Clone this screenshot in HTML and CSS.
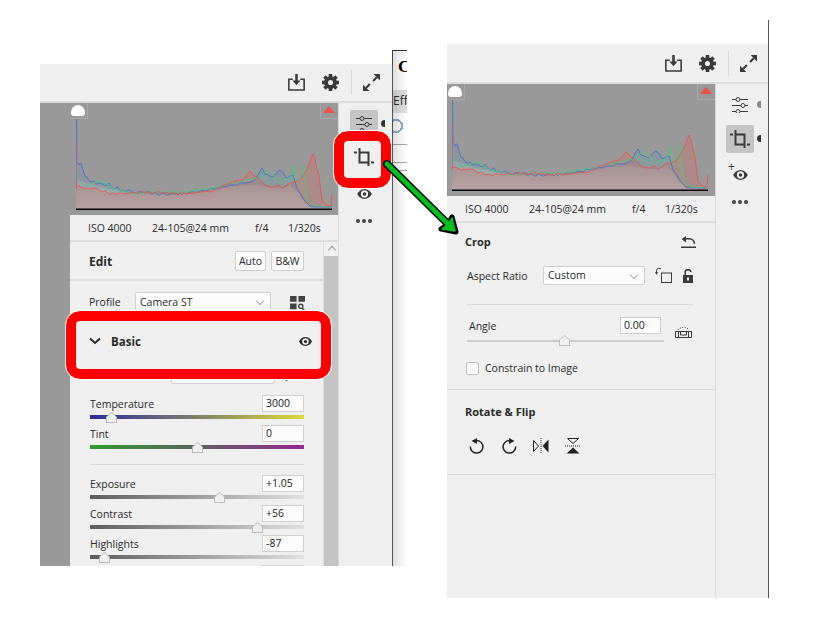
FILE: index.html
```html
<!DOCTYPE html>
<html lang="en">
<head>
    <meta charset="UTF-8">
    <title>Crop panel</title>
    <link rel="stylesheet" href="styles.css">
</head>
<body>
    <svg class="defs" xmlns="http://www.w3.org/2000/svg">
        <defs>
            <linearGradient id="lum" x1="0" y1="0" x2="0" y2="1">
                <stop offset="0" stop-color="#a8a3a3"/>
                <stop offset="1" stop-color="#c6bebe"/>
            </linearGradient>
            <symbol id="hist" viewBox="0 0 269 111">
                <polygon fill="url(#lum)" points="6,106 6,76 30,84 60,90 100,92 130,90 147,87 163,83 185,82 197,84 212,86 220,82 227,88 233,97 240,104 262,104 262,106"/>
                <polygon fill="#4a78c8" fill-opacity=".15" points="6,106 6,15 7,60 9,62 11,60 13,67 15,73 18,76 21,79 30,80 42,84 53,87 66,91 130,88 147,84 163,82 173,80 185,77 188,72 192,65 195,71 202,74 210,67 213,69 217,75 223,72 227,85 233,95 240,103 262,104 262,106"/>
                <polygon fill="#5ccf8e" fill-opacity=".14" points="6,106 6,62 9,76 12,80 16,83 24,80 30,78 38,81 44,85 50,88 60,90 130,86 163,80 187,75 192,71 197,68 203,72 213,77 220,75 223,63 225,64 227,80 232,72 234,62 236,84 238,97 247,103 262,104 262,106"/>
                <polygon fill="#f05050" fill-opacity=".22" points="6,106 6,86 9,83 14,85 20,86 26,85 32,89 40,91 46,92 60,90 130,89 147,86 163,79 173,76 180,68 185,73 190,77 197,83 202,84 207,82 212,85 220,80 230,77 238,65 243,51 247,67 249,72 252,97 257,103 261,103 262,91 262,106"/>
                <polyline class="ln blue" points="6.5,15 7,60 8,60 9,62 10,60 11,60 12,64 13,67 14,70 15,73 17,74 18,76 20,78 21,79 23,78 24,78 26,81 27,81 29,80 30,80 32,81 33,81 35,83 36,82 38,82 39,80 41,83 42,84 44,85 45,86 47,84 48,84 50,88 52,87 53,87 55,89 56,89 58,87 59,87 61,88 62,88 64,90 66,91 68,89 70,88 72,90 74,90 76,89 78,88 80,91 82,91 84,90 86,89 88,92 90,92 92,90 94,90 96,92 98,92 100,91 102,89 104,91 106,90 108,92 110,90 112,92 114,90 116,91 118,89 120,90 122,88 124,89 126,87 128,89 130,88 134,87 137,88 140,85 143,86 147,84 150,85 153,83 156,84 160,82 163,82 167,82 170,80 173,80 177,80 181,79 185,77 188,72 190,68 192,65 195,71 198,72 202,74 205,72 208,68 210,67 213,69 215,73 217,75 220,73 223,72 225,79 227,85 230,90 233,95 236,99 240,103 245,104 262,104"/>
                <polyline class="ln green" points="6,62 7,68 9,76 11,79 12,80 14,82 16,83 18,82 20,81 22,81 24,80 26,79 28,79 30,78 32,79 34,78 36,81 38,81 40,83 42,84 44,85 46,87 48,86 50,88 53,87 56,89 60,90 64,91 68,90 72,91 76,89 80,90 84,88 88,90 92,89 96,90 100,88 104,90 108,89 112,91 116,90 120,88 124,88 128,87 130,86 135,86 140,85 147,84 152,83 158,81 163,80 170,79 177,77 182,76 187,75 192,71 195,69 197,68 200,70 203,72 208,75 213,77 217,76 220,75 222,70 223,63 225,64 227,80 230,76 232,72 234,62 236,84 238,97 242,101 247,103 262,104"/>
                <polyline class="ln red" points="6,86 7,83 9,83 11,84 14,85 16,86 18,85 20,86 23,85 26,85 29,87 32,89 35,88 38,90 40,91 43,90 46,92 49,90 52,90 56,91 60,90 64,89 68,91 72,88 76,90 80,89 84,91 88,88 92,90 96,89 100,91 104,90 108,92 112,89 116,91 120,90 124,90 130,89 135,88 140,89 147,86 152,83 158,81 163,79 168,77 173,76 177,72 180,68 183,71 185,73 188,75 190,77 194,81 197,83 202,84 205,84 207,82 210,83 212,85 216,83 220,80 225,79 230,77 234,71 238,65 240,58 243,51 245,56 247,67 249,72 250,82 252,97 255,101 257,103 261,103 262,91"/>
                <path d="M6.500 40V86" stroke="#d04a90" stroke-opacity=".7"/>
                <rect x="6" y="105.500" width="256" height="1.500" fill="#000"/>
            </symbol>
            <symbol id="download" viewBox="0 0 16 16">
                <path d="M4.500 5H.8v10h14.400V5h-3.700" fill="none" stroke="currentColor" stroke-width="1.500"/>
                <path d="M6.800 0h2.400v6h2.600L8 10.600 4.200 6h2.600z" fill="currentColor"/>
            </symbol>
            <symbol id="gear" viewBox="0 0 16 16">
                <g fill="currentColor">
                    <circle cx="8" cy="8" r="6"/>
                    <rect x="6.300" y="0" width="3.400" height="16"/>
                    <rect x="6.300" y="0" width="3.400" height="16" transform="rotate(45 8 8)"/>
                    <rect x="6.300" y="0" width="3.400" height="16" transform="rotate(90 8 8)"/>
                    <rect x="6.300" y="0" width="3.400" height="16" transform="rotate(135 8 8)"/>
                </g>
                <circle cx="8" cy="8" r="2.400" fill="#efefef"/>
            </symbol>
            <symbol id="expand" viewBox="0 0 16 16">
                <path fill="currentColor" d="M10 0h6v6zM0 16v-6l6 6z"/>
                <path stroke="currentColor" stroke-width="2" d="M13 3L9.500 6.500M3 13l3.500-3.500"/>
            </symbol>
            <symbol id="sliders" viewBox="0 0 16 16">
                <g fill="none" stroke="currentColor">
                    <path d="M0 2.500h4M8 2.500h8M0 8.500h9M13 8.500h3M0 14.500h4M8 14.500h8"/>
                    <circle cx="6" cy="2.500" r="2"/>
                    <circle cx="11" cy="8.500" r="2"/>
                    <circle cx="6" cy="14.500" r="2"/>
                </g>
            </symbol>
            <symbol id="crop" viewBox="0 0 20 18">
                <path fill="none" stroke="currentColor" stroke-width="2" d="M5.500 0v14.500h9M5.500 4.500h9V18M0 4.500h3M17 14.500h3"/>
            </symbol>
            <symbol id="eye" viewBox="0 0 16 11">
                <path fill="currentColor" fill-rule="evenodd" d="M8 0c3.600 0 6.500 2.400 8 5.500C14.500 8.600 11.600 11 8 11S1.500 8.600 0 5.500C1.500 2.400 4.400 0 8 0zM8 1.500a4 4 0 1 0 0 8 4 4 0 0 0 0-8zM8 3.500a2 2 0 1 1 0 4 2 2 0 0 1 0-4z"/>
            </symbol>
            <symbol id="profiles" viewBox="0 0 16 16">
                <path fill="currentColor" d="M0 0h7v6H0zM9 0h7v6H9zM0 8h7v6H0z"/>
                <circle cx="11.500" cy="11" r="2.200" fill="none" stroke="currentColor" stroke-width="1.500"/>
                <path d="M13 13l2.500 2.500" stroke="currentColor" stroke-width="1.500"/>
            </symbol>
            <symbol id="rotate" viewBox="0 0 16 16">
                <path fill="none" stroke="currentColor" stroke-width="1.500" d="M4.500 3.300a6.300 6.300 0 1 1-3.200 5.200"/>
                <path fill="currentColor" d="M8 0v6L2.500 3z"/>
            </symbol>
        </defs>
    </svg>

    <!-- window peeking out behind the left panel -->
    <div class="back-window">
        <div class="back-title">C</div>
        <div class="back-tabs">Effe</div>
        <div class="back-tool"></div>
        <div class="back-line back-line-a"></div>
        <div class="back-line back-line-b"></div>
    </div>

    <!-- left panel: Edit -->
    <section class="panel panel-left">
        <header class="topbar">
            <svg class="ico-top"><use href="#download"/></svg>
            <svg class="ico-top"><use href="#gear"/></svg>
            <span class="top-sep"></span>
            <svg class="ico-top"><use href="#expand"/></svg>
        </header>
        <div class="panel-body">
            <div class="strip"></div>
            <div class="main">
                <div class="histogram">
                    <svg class="hist-svg"><use href="#hist"/></svg>
                    <span class="clip clip-shadow"></span>
                    <span class="clip clip-high"></span>
                </div>
                <div class="info">
                    <span class="iso">ISO 4000</span>
                    <span class="lens">24-105@24 mm</span>
                    <span class="fstop">f/4</span>
                    <span>1/320s</span>
                </div>
                <div class="scroll-wrap">
                    <div class="edit">
                        <div class="edit-head">
                            <h2>Edit</h2>
                            <button class="btn btn-auto">Auto</button>
                            <button class="btn btn-bw">B&amp;W</button>
                        </div>
                        <div class="profile-row">
                            <span class="profile-label">Profile</span>
                            <div class="select select-profile">Camera ST</div>
                            <svg class="ico-profiles"><use href="#profiles"/></svg>
                        </div>
                        <div class="basic-row">
                            <div class="select select-blank"></div>
                        </div>
                        <div class="sliders">
                            <div class="slider-row">
                                <label>Temperature</label><span class="val">3000</span>
                                <div class="track track-temp"><i class="thumb thumb-temp"></i></div>
                            </div>
                            <div class="slider-row">
                                <label>Tint</label><span class="val">0</span>
                                <div class="track track-tint"><i class="thumb thumb-tint"></i></div>
                            </div>
                            <hr class="rule">
                            <div class="slider-row">
                                <label>Exposure</label><span class="val">+1.05</span>
                                <div class="track track-grey"><i class="thumb thumb-exp"></i></div>
                            </div>
                            <div class="slider-row">
                                <label>Contrast</label><span class="val">+56</span>
                                <div class="track track-grey"><i class="thumb thumb-con"></i></div>
                            </div>
                            <div class="slider-row">
                                <label>Highlights</label><span class="val">-87</span>
                                <div class="track track-grey"><i class="thumb thumb-hi"></i></div>
                            </div>
                            <div class="slider-row">
                                <label></label><span class="val"></span>
                            </div>
                        </div>
                    </div>
                    <div class="scrollbar"><span class="scroll-up"></span></div>
                </div>
            </div>
            <aside class="rail rail-left">
                <div class="rail-item is-active is-flagged"><svg class="ico-rail"><use href="#sliders"/></svg></div>
                <div class="rail-item"><svg class="ico-crop"><use href="#crop"/></svg></div>
                <div class="rail-item rail-eye"><svg class="ico-eye"><use href="#eye"/></svg></div>
                <div class="dots"><i></i><i></i><i></i></div>
            </aside>
        </div>
    </section>

    <!-- right panel: Crop -->
    <div class="frame-line"></div>
    <section class="panel panel-right">
        <header class="topbar">
            <svg class="ico-top"><use href="#download"/></svg>
            <svg class="ico-top"><use href="#gear"/></svg>
            <span class="top-sep"></span>
            <svg class="ico-top"><use href="#expand"/></svg>
        </header>
        <div class="panel-body">
            <div class="main">
                <div class="histogram">
                    <svg class="hist-svg"><use href="#hist"/></svg>
                    <span class="clip clip-shadow"></span>
                    <span class="clip clip-high"></span>
                </div>
                <div class="info">
                    <span class="iso">ISO 4000</span>
                    <span class="lens">24-105@24 mm</span>
                    <span class="fstop">f/4</span>
                    <span>1/320s</span>
                </div>
                <div class="crop-section">
                    <div class="crop-head">
                        <h2>Crop</h2>
                        <svg class="ico-reset" viewBox="0 0 15 12">
                            <path fill="none" stroke="currentColor" stroke-width="1.500" d="M4 2.800h4.500a5 5 0 0 1 5 5"/>
                            <path fill="currentColor" d="M5 0v6.500L.5 3zM0 10.500h15V12H0z"/>
                        </svg>
                    </div>
                    <div class="aspect-row">
                        <span class="aspect-label">Aspect Ratio</span>
                        <div class="select select-aspect">Custom</div>
                        <svg class="ico-orient" viewBox="0 0 16 15">
                            <rect x="5.500" y="5" width="10" height="9.500" fill="none" stroke="currentColor"/>
                            <path fill="none" stroke="currentColor" d="M.5 5V2.500a2 2 0 0 1 2-2H5"/>
                            <path fill="currentColor" d="M-1 4h3L.5 7z"/>
                        </svg>
                        <svg class="ico-lock" viewBox="0 0 10 14">
                            <path fill="currentColor" fill-rule="evenodd" d="M0 6h10v8H0zM4 8.500v3h2v-3z"/>
                            <path fill="none" stroke="currentColor" stroke-width="1.500" d="M2.200 6V3a2.800 2.300 0 0 1 5.600 0"/>
                        </svg>
                    </div>
                    <hr class="rule rule-crop">
                    <div class="angle-row">
                        <div class="angle-main">
                            <label>Angle</label><span class="val">0.00</span>
                            <div class="track track-thin"><i class="thumb thumb-angle"></i></div>
                        </div>
                        <svg class="ico-level" viewBox="0 0 17 12">
                            <path fill="none" stroke="currentColor" d="M.5 5.500h16v6H.5zM5.500 5.500v3.500h6V5.500M3.500 5.500v6M13.500 5.500v6"/>
                            <path fill="none" stroke="currentColor" stroke-dasharray="1 1.500" d="M3 4C5 .5 12 .5 14 4"/>
                        </svg>
                    </div>
                    <div class="check-row"><span class="checkbox"></span>Constrain to Image</div>
                </div>
                <div class="flip-section">
                    <h2>Rotate &amp; Flip</h2>
                    <div class="flip-icons">
                        <svg class="ico-flip"><use href="#rotate"/></svg>
                        <svg class="ico-flip ico-mirror"><use href="#rotate"/></svg>
                        <svg class="ico-flip" viewBox="0 0 16 16">
                            <path d="M8 0v16" stroke="currentColor" stroke-dasharray="1 1"/>
                            <path d="M.5 2.500l5 5.500-5 5.500z" fill="none" stroke="currentColor"/>
                            <path d="M15.500 1.500v13L9.500 8z" fill="currentColor"/>
                        </svg>
                        <svg class="ico-flip" viewBox="0 0 16 16">
                            <path d="M0 8h16" stroke="currentColor" stroke-dasharray="1 1"/>
                            <path d="M2.500.5h11L8 5.500z" fill="none" stroke="currentColor"/>
                            <path d="M1.500 15.500h13L8 9.500z" fill="currentColor"/>
                        </svg>
                    </div>
                </div>
            </div>
            <aside class="rail rail-right">
                <div class="rail-item is-flagged"><svg class="ico-rail"><use href="#sliders"/></svg></div>
                <div class="rail-item is-active is-flagged"><svg class="ico-crop"><use href="#crop"/></svg></div>
                <div class="rail-item rail-eye"><span class="plus">+</span><svg class="ico-eye"><use href="#eye"/></svg></div>
                <div class="dots"><i></i><i></i><i></i></div>
            </aside>
        </div>
    </section>

    <!-- annotations drawn over the screenshots -->
    <div class="callout callout-crop"></div>
    <div class="callout callout-basic">
        <svg class="basic-chevron" viewBox="0 0 12 8"><path d="M1 1.500l5 4.500 5-4.500" fill="none" stroke="currentColor" stroke-width="2"/></svg>
        <strong>Basic</strong>
        <svg class="basic-eye"><use href="#eye"/></svg>
    </div>
    <svg class="arrow" viewBox="0 0 829 618">
        <path d="M387 164L449 225" stroke="#000" stroke-width="8" stroke-linecap="round" fill="none"/>
        <path d="M441 229L456 232L452 217L448 224Z" fill="#000" stroke="#000" stroke-width="5" stroke-linejoin="round"/>
        <path d="M387 164L449 225" stroke="#00c020" stroke-width="5" stroke-linecap="round" fill="none"/>
        <path d="M442 229L455 231L452 218L448 224Z" fill="#00c020" stroke="#00c020" stroke-width="1.500" stroke-linejoin="round"/>
    </svg>
</body>
</html>
```

FILE: styles.css
```css
:root {
    --panel: #efefef;
    --line: #d8d8d8;
    --ink: #2b2b2b;
    --icon: #3a3a3a;
}

* {
    box-sizing: border-box;
    margin: 0;
    padding: 0;
}

body {
    width: 829px;
    height: 618px;
    position: relative;
    overflow: hidden;
    background: #fff;
    color: var(--ink);
    font-family: "Open Sans", "Noto Sans", sans-serif;
    font-size: 10.5px;
}

.defs {
    position: absolute;
    width: 0;
    height: 0;
}

h2 {
    font-size: 11.5px;
    font-weight: 700;
}

/* windows on the canvas */
.panel {
    position: absolute;
    display: flex;
    flex-direction: column;
    background: var(--panel);
    overflow: hidden;
}

.panel-left {
    left: 40px;
    top: 64px;
    width: 353px;
    height: 502px;
    border-right: 1px solid #555;
}

.panel-right {
    left: 447px;
    top: 44px;
    width: 321px;
    height: 554px;
}

.frame-line {
    position: absolute;
    left: 768px;
    top: 20px;
    width: 1px;
    height: 578px;
    background: #555;
}

.back-window {
    position: absolute;
    left: 392px;
    top: 50px;
    width: 15px;
    height: 516px;
    overflow: hidden;
    background: #fff;
    border-top: 1px solid #333;
    border-left: 1px solid #444;
}

.back-window::after {
    content: "";
    position: absolute;
    inset: 0;
    background: linear-gradient(90deg, rgba(0, 0, 0, .13), rgba(0, 0, 0, .05) 55%, transparent);
}

.back-title {
    height: 39px;
    padding: 6px 0 0 5px;
    font: 700 17px "Liberation Serif", serif;
    color: #000;
}

.back-tabs {
    height: 23px;
    padding: 2px 0 0;
    background: #dedede;
    font-size: 12px;
    white-space: nowrap;
}

.back-tool {
    height: 32px;
    border-bottom: 1px solid #a8a8a8;
    background: radial-gradient(circle at 3px 13px, transparent 5px, #8fa9c8 5px, #8fa9c8 7px, transparent 7px);
}

.back-line {
    border-bottom: 1px solid #a8a8a8;
}

.back-line-a {
    height: 18px;
}

.back-line-b {
    height: 8px;
}

.topbar {
    flex: none;
    height: 39px;
    display: flex;
    align-items: center;
    justify-content: flex-end;
    padding-right: 12px;
    border-bottom: 2px solid #dcdcdc;
    color: var(--icon);
}

.panel-right .topbar {
    height: 40px;
    padding-right: 11px;
}

.ico-top {
    width: 17px;
    height: 17px;
    margin-left: 17px;
}

.top-sep {
    width: 1px;
    height: 25px;
    margin: 0 -6px 0 12px;
    background: #d8d8d8;
}

.panel-body {
    flex: 1;
    display: flex;
    min-height: 0;
}

.strip {
    flex: none;
    width: 30px;
    background: #999;
}

.main {
    flex: none;
    width: 269px;
    display: flex;
    flex-direction: column;
    border-right: 1px solid var(--line);
}

.rail {
    flex: 1;
    display: flex;
    flex-direction: column;
    align-items: center;
    padding-top: 7px;
    color: var(--icon);
}

.rail-left {
    padding-right: 3px;
}

.rail-right {
    padding-right: 4px;
}

/* histogram */
.histogram {
    flex: none;
    height: 112px;
    position: relative;
    background: #999;
}

.hist-svg {
    display: block;
    width: 269px;
    height: 111px;
}

.panel-right .hist-svg {
    margin-left: -1px;
}

.ln {
    fill: none;
    stroke-width: .9;
}

.blue {
    stroke: #3f74d0;
}

.green {
    stroke: #4fc47c;
}

.red {
    stroke: #f0504c;
}

.clip {
    position: absolute;
    top: 0;
    width: 18px;
    height: 16px;
    border: 1px solid #a8a8a8;
    border-top: 0;
}

.clip::after {
    content: "";
    position: absolute;
    left: 2px;
    top: 3px;
}

.clip-shadow {
    left: 0;
    border-left: 0;
}

.clip-shadow::after {
    width: 14px;
    height: 11px;
    left: 1px;
    top: 2px;
    background: #fff;
    border-radius: 7px 7px 3px 3px / 8px 8px 3px 3px;
}

.clip-high {
    right: 0;
    border-right: 0;
}

.clip-high::after {
    border: 6px solid transparent;
    border-top: 0;
    border-bottom: 7px solid #f2504a;
}

.info {
    flex: none;
    height: 27px;
    display: flex;
    align-items: center;
    padding-left: 18px;
    white-space: nowrap;
    font-size: 10.5px;
    border-bottom: 2px solid #dcdcdc;
}

.iso {
    width: 64px;
}

.lens {
    width: 103px;
}

.fstop {
    width: 33px;
}

/* left panel settings */
.scroll-wrap {
    flex: 1;
    display: flex;
    min-height: 0;
}

.edit {
    width: 254px;
    flex: none;
    border-right: 1px solid #dcdcdc;
}

.edit-head {
    height: 39px;
    display: flex;
    align-items: center;
    padding: 0 19px;
    border-bottom: 2px solid #dcdcdc;
}

.edit-head h2 {
    flex: 1;
    font-size: 12px;
    margin-top: 2px;
}

.btn {
    height: 20px;
    background: #fbfbfb;
    border: 1px solid #cfcfcf;
    border-radius: 2px;
    font: inherit;
    color: inherit;
}

.btn-auto {
    width: 31px;
    margin-right: 5px;
}

.btn-bw {
    width: 33px;
}

.profile-row {
    height: 31px;
    display: flex;
    align-items: flex-end;
    padding-left: 19px;
}

.profile-label {
    width: 46px;
    padding-bottom: 3px;
}

.select {
    position: relative;
    background: #fbfbfb;
    border: 1px solid #d0d0d0;
    border-radius: 2px;
    padding-left: 4px;
    line-height: 18px;
    font-size: 10.5px;
}

.select::after {
    content: "";
    position: absolute;
    right: 7px;
    top: 5px;
    width: 5px;
    height: 5px;
    border-right: 1px solid #aaa;
    border-bottom: 1px solid #aaa;
    transform: rotate(45deg);
}

.select-profile {
    width: 136px;
    height: 20px;
}

.ico-profiles {
    width: 15px;
    height: 15px;
    margin: 0 0 1px 19px;
    color: #444;
}

.basic-row {
    height: 72px;
    padding: 51px 0 0 101px;
}

.select-blank {
    width: 104px;
    height: 21px;
}

/* the small stepper beside the blank select */
.select-blank::after {
    right: -15px;
    top: 11px;
    width: 4px;
    height: 4px;
    border-color: #444;
}

.sliders {
    padding: 11px 19px 0 20px;
}

.slider-row {
    height: 30px;
    display: grid;
    grid-template-columns: 1fr 42px;
    grid-template-rows: 17px 4px;
    row-gap: 3px;
    align-items: center;
}

.val {
    height: 17px;
    background: #fbfbfb;
    border: 1px solid #d0d0d0;
    padding-left: 3px;
    line-height: 15px;
    font-size: 10.5px;
    color: #222;
}

.track {
    grid-column: 1 / -1;
    position: relative;
    height: 4px;
}

.track-temp {
    background: linear-gradient(90deg, #2b2d9c, #80806a 50%, #dcd838);
}

.track-tint {
    background: linear-gradient(90deg, #2d9c2d, #606060 50%, #932a93);
}

.track-grey {
    background: linear-gradient(90deg, #5c5c5c, #e0e0e0);
}

.thumb {
    position: absolute;
    top: -3px;
    width: 11px;
    height: 11px;
    margin-left: -5px;
    background: #bbb;
    clip-path: polygon(50% 0, 100% 45%, 100% 100%, 0 100%, 0 45%);
}

.thumb::after {
    content: "";
    position: absolute;
    inset: 1px;
    background: #efefef;
    clip-path: polygon(50% 0, 100% 45%, 100% 100%, 0 100%, 0 45%);
}

.thumb-temp {
    left: 21px;
}

.thumb-tint {
    left: 107px;
}

.thumb-exp {
    left: 129px;
}

.thumb-con {
    left: 167px;
}

.thumb-hi {
    left: 14px;
}

.thumb-angle {
    left: 97px;
    top: -5px;
}

.rule {
    border: 0;
    height: 1px;
    background: var(--line);
    margin: 9px 0 10px;
}

.scrollbar {
    flex: 1;
    background: #c4c4c4;
}

.scroll-up {
    display: block;
    height: 14px;
    background: #efefef;
    position: relative;
}

.scroll-up::after {
    content: "";
    position: absolute;
    left: 5px;
    top: 5px;
    width: 5px;
    height: 5px;
    border-left: 1px solid #999;
    border-top: 1px solid #999;
    transform: rotate(45deg);
}

/* tool rail */
.rail-item {
    position: relative;
    flex: none;
    width: 28px;
    height: 28px;
    margin-bottom: 6px;
    border-radius: 2px;
    display: flex;
    align-items: center;
    justify-content: center;
}

.is-active {
    background: #c4c4c4;
}

.is-flagged::after {
    content: "";
    position: absolute;
    left: 31px;
    top: 10px;
    width: 4px;
    height: 7px;
    border-radius: 4px 0 0 4px;
    background: #333;
}

.rail-left .rail-item:first-child {
    margin-bottom: 5px;
}

.rail-left .rail-item:nth-child(2) {
    margin-bottom: 15px;
}

.rail-left .rail-eye {
    margin-bottom: 17px;
}

.rail-right .rail-item:first-child::after {
    background: #888;
}

.rail-right .rail-item:nth-child(2) {
    margin-bottom: 12px;
}

.rail-right .rail-eye {
    margin-bottom: 19px;
}

.ico-rail {
    width: 16px;
    height: 16px;
}

.ico-crop {
    width: 20px;
    height: 18px;
}

.ico-eye {
    width: 15px;
    height: 10px;
}

.rail-eye {
    height: 16px;
}

.plus {
    position: absolute;
    left: 2px;
    top: -5px;
    font-size: 12px;
    line-height: 14px;
}

.rail-right .rail-eye .ico-eye {
    margin-top: 3px;
}

.dots {
    display: flex;
    gap: 2px;
}

.dots i {
    width: 4px;
    height: 4px;
    border-radius: 50%;
    background: #444;
}

/* crop settings */
.crop-section {
    height: 167px;
    padding: 12px 19px 0 18px;
    border-bottom: 1px solid var(--line);
}

.crop-head {
    display: flex;
    align-items: center;
    justify-content: space-between;
    height: 14px;
    margin-bottom: 17px;
}

.crop-head h2 {
    font-size: 11px;
    margin-top: -2px;
}

.ico-reset {
    width: 15px;
    height: 12px;
    color: var(--icon);
}

.aspect-row {
    display: flex;
    align-items: center;
    padding-left: 2px;
}

.aspect-label {
    width: 76px;
}

.select-aspect {
    width: 102px;
    height: 19px;
    line-height: 17px;
}

.ico-orient {
    width: 16px;
    height: 15px;
    margin-left: 11px;
    color: var(--icon);
    overflow: visible;
}

.ico-lock {
    width: 10px;
    height: 14px;
    margin-left: 11px;
    color: var(--icon);
}

.rule-crop {
    margin: 19px 0 12px 2px;
    width: 226px;
}

.angle-row {
    display: flex;
    align-items: flex-end;
    padding-left: 2px;
}

.angle-main {
    width: 197px;
    display: grid;
    grid-template-columns: 1fr 41px 3px;
    grid-template-rows: 17px 2px;
    row-gap: 6px;
    align-items: center;
}

.angle-main label {
    padding-left: 2px;
}

.track-thin {
    height: 2px;
    background: #ccc;
}

.ico-level {
    width: 17px;
    height: 12px;
    margin: 0 0 4px 11px;
    color: var(--icon);
}

.check-row {
    display: flex;
    align-items: center;
    gap: 6px;
    margin-top: 19px;
    padding-left: 1px;
}

.checkbox {
    width: 13px;
    height: 13px;
    background: #fbfbfb;
    border: 1px solid #bdbdbd;
    border-radius: 2px;
}

.flip-section {
    height: 85px;
    padding: 14px 0 0 18px;
    border-bottom: 1px solid var(--line);
}

.flip-section h2 {
    font-size: 11px;
    margin-bottom: 19px;
}

.flip-icons {
    display: flex;
    gap: 16px;
    padding-left: 4px;
    color: #222;
}

.ico-flip {
    width: 16px;
    height: 16px;
}

.ico-mirror {
    transform: scaleX(-1);
}

/* red annotations */
.callout {
    position: absolute;
    border: 10px solid #f00;
    outline: 1px solid #fff;
    background: var(--panel);
}

.callout-crop {
    left: 334px;
    top: 131px;
    width: 57px;
    height: 57px;
    border-radius: 14px;
    background: transparent;
}

.callout-basic {
    left: 66px;
    top: 311px;
    width: 265px;
    height: 68px;
    border-radius: 14px;
    display: flex;
    align-items: center;
    padding: 0 9px 8px 13px;
}

.callout-basic strong {
    flex: 1;
    margin-left: 10px;
    font-size: 11.5px;
}

.basic-chevron {
    width: 12px;
    height: 8px;
    color: var(--ink);
}

.basic-eye {
    width: 13px;
    height: 9px;
    color: var(--ink);
}

.arrow {
    position: absolute;
    left: 0;
    top: 0;
    width: 829px;
    height: 618px;
    pointer-events: none;
}
```
